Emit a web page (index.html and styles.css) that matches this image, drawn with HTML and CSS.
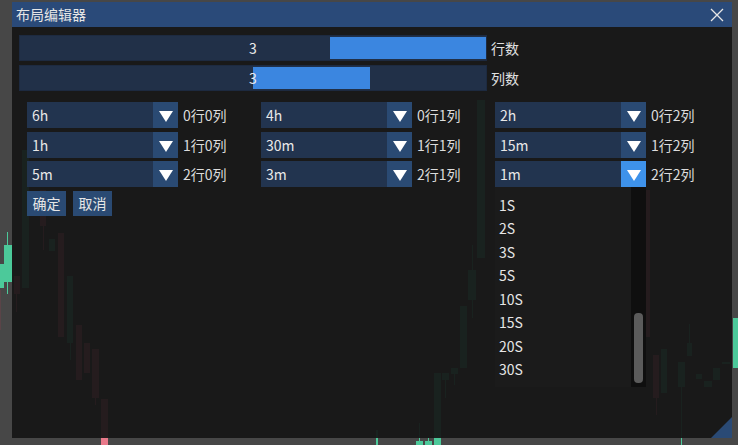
FILE: index.html
```html
<!DOCTYPE html>
<html lang="zh">
<head>
<meta charset="utf-8">
<title>布局编辑器</title>
<link rel="stylesheet" href="styles.css">
</head>
<body>
<div class="chart">
  <div class="c g" style="left:7px;top:232px;width:1px;height:62px"></div>
  <div class="c g" style="left:4px;top:245px;width:8px;height:37px"></div>
  <div class="c g" style="left:0;top:264px;width:4px;height:24px"></div>
  <div class="c g" style="left:22px;top:150px;width:7px;height:138px"></div>
  <div class="c g" style="left:49px;top:239px;width:6px;height:12px"></div>
  <div class="c g" style="left:70px;top:276px;width:1px;height:84px"></div>
  <div class="c g" style="left:67px;top:276px;width:6px;height:67px"></div>
  <div class="c g" style="left:477px;top:100px;width:8px;height:158px"></div>
  <div class="c g" style="left:472px;top:245px;width:1px;height:73px"></div>
  <div class="c g" style="left:468px;top:270px;width:8px;height:30px"></div>
  <div class="c g" style="left:460px;top:306px;width:7px;height:62px"></div>
  <div class="c g" style="left:454px;top:368px;width:1px;height:17px"></div>
  <div class="c g" style="left:451px;top:368px;width:7px;height:6px"></div>
  <div class="c g" style="left:445px;top:373px;width:1px;height:25px"></div>
  <div class="c g" style="left:442px;top:373px;width:7px;height:7px"></div>
  <div class="c g" style="left:434px;top:373px;width:7px;height:72px"></div>
  <div class="c g" style="left:419px;top:423px;width:1px;height:18px"></div>
  <div class="c g" style="left:416px;top:441px;width:7px;height:4px"></div>
  <div class="c g" style="left:428px;top:438px;width:1px;height:7px"></div>
  <div class="c g" style="left:425px;top:441px;width:7px;height:4px"></div>
  <div class="c g" style="left:376px;top:430px;width:2px;height:15px"></div>
  <div class="c g" style="left:661px;top:349px;width:6px;height:44px"></div>
  <div class="c g" style="left:681px;top:362px;width:1px;height:83px"></div>
  <div class="c g" style="left:678px;top:362px;width:7px;height:25px"></div>
  <div class="c g" style="left:689px;top:324px;width:1px;height:20px"></div>
  <div class="c g" style="left:687px;top:343px;width:5px;height:13px"></div>
  <div class="c g" style="left:696px;top:374px;width:6px;height:5px"></div>
  <div class="c g" style="left:704px;top:381px;width:8px;height:6px"></div>
  <div class="c g" style="left:713px;top:368px;width:7px;height:12px"></div>
  <div class="c g" style="left:722px;top:362px;width:8px;height:2px"></div>
  <div class="c g" style="left:733px;top:318px;width:5px;height:50px"></div>
  <div class="c rd" style="left:0;top:290px;width:1px;height:40px"></div>
  <div class="c r" style="left:16px;top:276px;width:1px;height:36px"></div>
  <div class="c r" style="left:14px;top:276px;width:6px;height:18px"></div>
  <div class="c r" style="left:43px;top:190px;width:1px;height:60px"></div>
  <div class="c r" style="left:40px;top:190px;width:6px;height:36px"></div>
  <div class="c r" style="left:58px;top:233px;width:6px;height:104px"></div>
  <div class="c r" style="left:76px;top:325px;width:6px;height:55px"></div>
  <div class="c r" style="left:84px;top:343px;width:6px;height:30px"></div>
  <div class="c r" style="left:95px;top:349px;width:1px;height:56px"></div>
  <div class="c r" style="left:92px;top:349px;width:7px;height:49px"></div>
  <div class="c r" style="left:101px;top:399px;width:7px;height:46px"></div>
  <div class="c r" style="left:646px;top:190px;width:4px;height:147px"></div>
  <div class="c r" style="left:656px;top:355px;width:1px;height:60px"></div>
  <div class="c r" style="left:653px;top:355px;width:6px;height:43px"></div>
</div>

<div class="dialog">
  <div class="titlebar">
    <span class="title">布局编辑器</span>
    <svg class="close" width="14" height="14" viewBox="0 0 14 14"><path d="M1 1 L13 13 M13 1 L1 13" stroke="#e6e6e6" stroke-width="1.3" fill="none"/></svg>
  </div>
  <div class="content">
    <div class="slider-row">
      <div class="slider"><div class="fill" style="left:310px;width:156px"></div><span class="val">3</span></div>
      <span class="slabel">行数</span>
    </div>
    <div class="slider-row">
      <div class="slider"><div class="fill" style="left:233px;width:117px"></div><span class="val">3</span></div>
      <span class="slabel">列数</span>
    </div>
    <div class="grid">
      <div class="cell"><div class="combo"><span class="ctext">6h</span><span class="carrow"><svg width="14" height="11" viewBox="0 0 14 11"><polygon points="0,0 14,0 7,11" fill="#fff"/></svg></span></div><span class="clabel">0行0列</span></div>
      <div class="cell"><div class="combo"><span class="ctext">4h</span><span class="carrow"><svg width="14" height="11" viewBox="0 0 14 11"><polygon points="0,0 14,0 7,11" fill="#fff"/></svg></span></div><span class="clabel">0行1列</span></div>
      <div class="cell"><div class="combo"><span class="ctext">2h</span><span class="carrow"><svg width="14" height="11" viewBox="0 0 14 11"><polygon points="0,0 14,0 7,11" fill="#fff"/></svg></span></div><span class="clabel">0行2列</span></div>
      <div class="cell"><div class="combo"><span class="ctext">1h</span><span class="carrow"><svg width="14" height="11" viewBox="0 0 14 11"><polygon points="0,0 14,0 7,11" fill="#fff"/></svg></span></div><span class="clabel">1行0列</span></div>
      <div class="cell"><div class="combo"><span class="ctext">30m</span><span class="carrow"><svg width="14" height="11" viewBox="0 0 14 11"><polygon points="0,0 14,0 7,11" fill="#fff"/></svg></span></div><span class="clabel">1行1列</span></div>
      <div class="cell"><div class="combo"><span class="ctext">15m</span><span class="carrow"><svg width="14" height="11" viewBox="0 0 14 11"><polygon points="0,0 14,0 7,11" fill="#fff"/></svg></span></div><span class="clabel">1行2列</span></div>
      <div class="cell"><div class="combo"><span class="ctext">5m</span><span class="carrow"><svg width="14" height="11" viewBox="0 0 14 11"><polygon points="0,0 14,0 7,11" fill="#fff"/></svg></span></div><span class="clabel">2行0列</span></div>
      <div class="cell"><div class="combo"><span class="ctext">3m</span><span class="carrow"><svg width="14" height="11" viewBox="0 0 14 11"><polygon points="0,0 14,0 7,11" fill="#fff"/></svg></span></div><span class="clabel">2行1列</span></div>
      <div class="cell"><div class="combo"><span class="ctext">1m</span><span class="carrow active"><svg width="14" height="11" viewBox="0 0 14 11"><polygon points="0,0 14,0 7,11" fill="#fff"/></svg></span></div><span class="clabel">2行2列</span></div>
    </div>
    <div class="buttons">
      <span class="btn">确定</span>
      <span class="btn">取消</span>
    </div>
  </div>
  <div class="popup">
    <ul class="list">
      <li>1S</li><li>2S</li><li>3S</li><li>5S</li><li>10S</li><li>15S</li><li>20S</li><li>30S</li>
    </ul>
    <div class="scrollbar"><div class="thumb"></div></div>
  </div>
  <div class="grip"></div>
</div>
</body>
</html>
```

FILE: styles.css
```css
* { box-sizing: border-box; }
html, body { margin: 0; padding: 0; }
body {
  width: 738px;
  height: 445px;
  overflow: hidden;
  position: relative;
  background: #474747;
  font-family: "Noto Sans CJK SC", "Noto Sans", sans-serif;
  font-size: 14px;
  color: #e4e4e4;
}
.chart { position: absolute; left: 0; top: 0; width: 738px; height: 445px; }
.c { position: absolute; }
.g { background: #4cc99a; }
.r { background: #e8798a; }
.rd { background: #5a4448; }

.dialog {
  position: absolute;
  left: 12px;
  top: 2px;
  width: 720px;
  height: 436px;
  background: rgba(21, 21, 21, 0.93);
}
.titlebar {
  height: 25px;
  background: #2a4a79;
  display: flex;
  align-items: center;
  justify-content: space-between;
  padding: 0 8px 0 4px;
}
.title { font-size: 14px; line-height: 25px; color: #e6e6e6; }
.close { display: block; }

.content { padding: 8px 0 0 7px; }
.slider-row { display: flex; align-items: center; margin-bottom: 4px; }
.slider {
  position: relative;
  width: 468px;
  height: 26px;
  background: #213048;
  border: 1px solid #1d2a40;
  display: flex;
  align-items: center;
  justify-content: center;
}
.fill { position: absolute; top: 1px; bottom: 1px; background: #3b86e0; }
.val { position: relative; line-height: 24px; color: #eaeaea; }
.slabel { margin-left: 4px; line-height: 24px; color: #e0e0e0; }

.grid {
  margin: 11px 0 0 8px;
  display: grid;
  grid-template-columns: repeat(3, 234px);
  row-gap: 3.5px;
}
.cell { display: flex; align-items: center; }
.combo { display: flex; width: 151px; height: 26px; background: #22344f; }
.ctext { flex: 1; padding-left: 5px; line-height: 26px; color: #e8e8e8; }
.carrow {
  width: 25px;
  background: #2a4a73;
  display: flex;
  align-items: center;
  justify-content: center;
  padding-top: 3px;
}
.carrow.active { background: #3e92ea; }
.carrow svg { display: block; }
.clabel { margin-left: 5px; line-height: 26px; color: #dcdcdc; }

.buttons { margin: 4px 0 0 8px; display: flex; gap: 7px; }
.btn {
  width: 39px;
  height: 25px;
  background: #2a4a73;
  color: #e6e6e6;
  line-height: 25px;
  text-align: center;
}

.popup {
  position: absolute;
  left: 483px;
  top: 185px;
  width: 151px;
  height: 200px;
  background: #1b1b1b;
  display: flex;
}
.list {
  list-style: none;
  margin: 0;
  padding: 6.5px 0 0 4px;
  flex: 1;
}
.list li { height: 23.5px; line-height: 23.5px; color: #e6e6e6; }
.scrollbar { width: 15px; height: 100%; background: #0f0f0f; padding: 126px 3px 0 3px; }
.thumb { width: 9px; height: 70px; background: #5b5b5b; border-radius: 4px; }

.grip {
  position: absolute;
  right: 0;
  bottom: 0;
  width: 21px;
  height: 21px;
  background: #2a4a75;
  clip-path: polygon(100% 0, 100% 100%, 0 100%);
}
```
